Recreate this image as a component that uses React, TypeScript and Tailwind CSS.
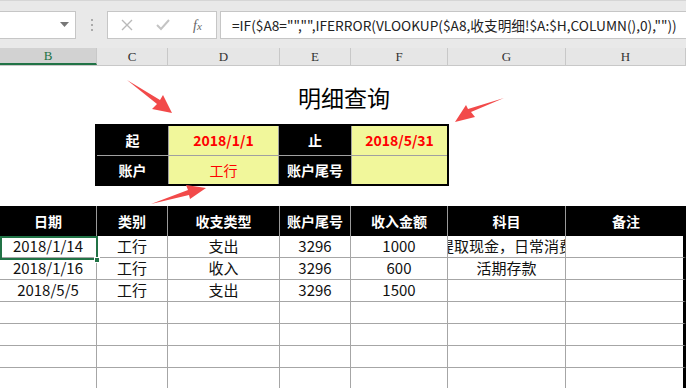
import React from 'react';

const cols = ['B', 'C', 'D', 'E', 'F', 'G', 'H'];
const grid = 'grid grid-cols-[97px_71px_112px_71px_97px_118px_120px]';

const head = ['日期', '类别', '收支类型', '账户尾号', '收入金额', '科目', '备注'];
const rows = [
    ['2018/1/14', '工行', '支出', '3296', '1000', '提取现金，日常消费', ''],
    ['2018/1/16', '工行', '收入', '3296', '600', '活期存款', ''],
    ['2018/5/5', '工行', '支出', '3296', '1500', '', ''],
    ['', '', '', '', '', '', ''],
    ['', '', '', '', '', '', ''],
    ['', '', '', '', '', '', ''],
    ['', '', '', '', '', '', ''],
];

const cjk = { fontFamily: '"Noto Sans CJK SC", "Noto Sans", sans-serif' };

function Arrow({ d }: { d: string }) {
    return <path d={d} fill="#f24a4a" />;
}

export default function App() {
    return (
        <div className="relative w-[686px] h-[388px] overflow-hidden bg-white" style={cjk}>
            {/* formula bar */}
            <div className="h-[48px] bg-[#e9e9e9] border-t border-[#d6d6d6] flex items-start pt-[10px]">
                <div className="w-[76px] h-[28px] bg-white border border-[#c6c6c6] border-l-0 flex items-center justify-end pr-[6px]">
                    <svg width="9" height="6" viewBox="0 0 9 6"><path d="M0 0h9L4.5 5z" fill="#777" /></svg>
                </div>
                <div className="w-[31px] h-[28px] flex flex-col items-center justify-center gap-[3px]">
                    <span className="w-[2px] h-[2px] bg-[#aaa]" />
                    <span className="w-[2px] h-[2px] bg-[#aaa]" />
                    <span className="w-[2px] h-[2px] bg-[#aaa]" />
                </div>
                <div className="w-[110px] h-[28px] bg-white border border-[#c6c6c6] flex items-center">
                    <svg className="ml-[13px]" width="12" height="12" viewBox="0 0 12 12"><path d="M1 1l10 10M11 1L1 11" stroke="#b9b9b9" strokeWidth="1.4" /></svg>
                    <svg className="ml-[23px]" width="14" height="12" viewBox="0 0 14 12"><path d="M1 6l4 4 8-9" stroke="#c4c4c4" strokeWidth="2" fill="none" /></svg>
                    <span className="ml-[23px] text-[14px] italic text-[#666]" style={{ fontFamily: '"Liberation Serif", serif' }}>f<span className="text-[11px]">x</span></span>
                </div>
                <div className="ml-[3px] flex-1 h-[28px] bg-white border border-[#c6c6c6] border-r-0 flex items-center pl-[11px] text-[13.7px] text-[#222] whitespace-nowrap">
                    =IF($A8="","",IFERROR(VLOOKUP($A8,收支明细!$A:$H,COLUMN(),0),""))
                </div>
            </div>

            {/* column headers */}
            <div className={`${grid} h-[18px] bg-[#e6e6e6] border-b border-[#c8c8c8]`}>
                {cols.map((c, i) => (
                    <div
                        key={c}
                        className={`flex items-center justify-center border-r border-[#c8c8c8] text-[13px] leading-none ${i === 0 ? 'bg-[#d2d2d2] text-[#217346] border-b-2 border-b-[#217346]' : 'text-[#333]'}`}
                        style={{ fontFamily: '"Liberation Serif", serif' }}
                    >
                        {c}
                    </div>
                ))}
            </div>

            {/* title */}
            <div className="h-[58px] flex items-center justify-center pt-[4px]">
                <span className="text-[23px] text-black ml-[2px]">明细查询</span>
            </div>

            {/* query panel */}
            <div className="ml-[95px] w-[354px] border-2 border-black bg-black grid grid-cols-[71px_111px_72px_96px] text-[14px] font-bold">
                <div className="h-[29px] flex items-center justify-center text-white">起</div>
                <div className="h-[29px] flex items-center justify-center bg-[#f1f79b] text-[#ff0000] border-x border-[#a0a0a0]">2018/1/1</div>
                <div className="h-[29px] flex items-center justify-center text-white">止</div>
                <div className="h-[29px] flex items-center justify-center bg-[#f1f79b] text-[#ff0000] border-l border-[#a0a0a0]">2018/5/31</div>
                <div className="h-[29px] flex items-center justify-center text-white border-t border-[#a0a0a0]">账户</div>
                <div className="h-[29px] flex items-center justify-center bg-[#f1f79b] text-[#ff0000] font-normal border-x border-t border-[#a0a0a0]">工行</div>
                <div className="h-[29px] flex items-center justify-center text-white border-t border-[#a0a0a0]">账户尾号</div>
                <div className="h-[29px] bg-[#f1f79b] border-l border-t border-[#a0a0a0]" />
            </div>

            {/* data table */}
            <div className="mt-[20px] w-[686px]">
                <div className={`${grid} h-[30px] bg-black`}>
                    {head.map((h, i) => (
                        <div key={h} className={`flex items-center justify-center text-white font-bold text-[14px] ${i < 6 ? 'border-r border-[#9a9a9a]' : ''}`}>
                            {h}
                        </div>
                    ))}
                </div>
                {rows.map((r, ri) => (
                    <div key={ri} className={`${grid} h-[22px]`}>
                        {r.map((v, ci) => (
                            <div
                                key={ci}
                                className={`relative flex items-center justify-center overflow-hidden whitespace-nowrap text-[15px] text-[#111] border-b border-[#a6a6a6] ${ci < 6 ? 'border-r' : 'border-r-[3px] border-r-black'}`}
                            >
                                {v}
                            </div>
                        ))}
                    </div>
                ))}
            </div>

            {/* active cell */}
            <div className="absolute left-0 top-[236px] w-[98px] h-[24px] border-2 border-[#217346]" />
            <div className="absolute left-[94px] top-[257px] w-[6px] h-[6px] bg-[#217346] border border-white" />

            {/* arrows */}
            <svg className="absolute left-0 top-0 pointer-events-none" width="686" height="388">
                <Arrow d="M127 80 L160 100 L163 95 L172 113 L152 109 L157 104 Z" />
                <Arrow d="M151 204 L188 190 L186 185 L206 188 L190 199 L189 195 Z" />
                <Arrow d="M504 98 L471 112 L475 117 L455 122 L466 105 L468 109 Z" />
            </svg>
        </div>
    );
}
